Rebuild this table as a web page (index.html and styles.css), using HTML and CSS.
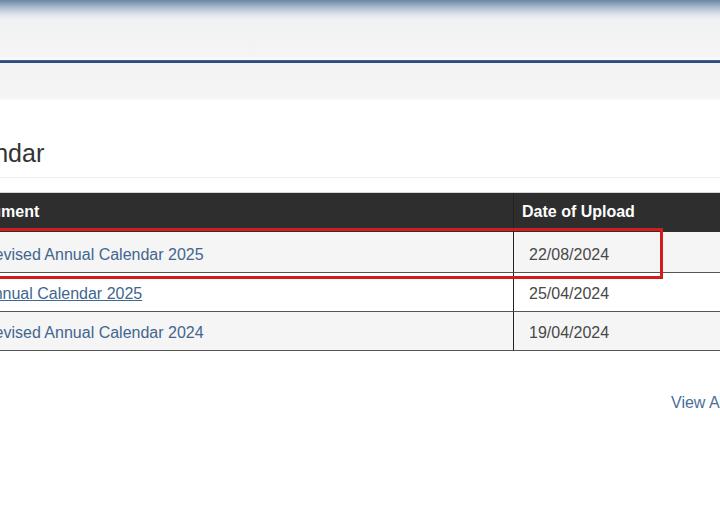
FILE: index.html
```html
<!DOCTYPE html>
<html lang="en">
<head>
<meta charset="utf-8">
<title>Annual Calendar</title>
<link rel="stylesheet" href="styles.css">
</head>
<body>
<header class="topbar"></header>
<div class="navline"></div>
<div class="subbar"></div>
<main class="content">
  <h2 class="page-title">Annual Calendar</h2>
  <div class="table-wrap">
    <table class="docs">
      <thead>
        <tr>
          <th class="col-doc">Document</th>
          <th class="col-date">Date of Upload</th>
        </tr>
      </thead>
      <tbody>
        <tr class="odd first">
          <td class="col-doc"><a href="#">Revised Annual Calendar 2025</a></td>
          <td class="col-date">22/08/2024</td>
        </tr>
        <tr class="even">
          <td class="col-doc"><a href="#" class="hover">Annual Calendar 2025</a></td>
          <td class="col-date">25/04/2024</td>
        </tr>
        <tr class="odd">
          <td class="col-doc"><a href="#">Revised Annual Calendar 2024</a></td>
          <td class="col-date">19/04/2024</td>
        </tr>
      </tbody>
    </table>
    <div class="highlight"></div>
  </div>
  <div class="more"><a href="#">View All</a></div>
</main>
</body>
</html>
```

FILE: styles.css
```css
html, body {
  margin: 0;
  padding: 0;
  background: #fff;
  overflow: hidden;
  width: 720px;
  height: 530px;
  font-family: "Liberation Sans", Arial, sans-serif;
}

.topbar {
  height: 60px;
  background: linear-gradient(to bottom, #6a85a3 0px, #a9b9cb 7px, #dde2e9 14px, #f0f1f2 20px, #f3f3f3 40px, #f5f5f6 56px, #fafbfb 60px);
}

.navline {
  height: 3px;
  background: linear-gradient(to bottom, #5a7898 0, #2e4f7a 1px, #2b4c78 3px);
}

.subbar {
  height: 37px;
  background: linear-gradient(to bottom, #f3f3f5 0, #f4f4f4 34px, #fbfbfb 37px);
}

.content {
  padding-top: 35px;
}

.page-title {
  margin: 0 0 0 -142px;
  font-weight: normal;
  font-size: 25px;
  line-height: 36px;
  color: #333;
  padding-bottom: 6px;
  border-bottom: 1px solid #eeeeee;
  white-space: nowrap;
}

.table-wrap {
  position: relative;
  margin-top: 14px;
}

.docs {
  border-collapse: separate;
  border-spacing: 0;
  margin-left: -47px;
  width: 830px;
  font-size: 16px;
  border-top: 1px solid #d5d5d5;
}

.docs th {
  background: #2e2e2e;
  color: #fff;
  font-weight: bold;
  text-align: left;
  padding: 10px 8px 11px 8px;
  line-height: 18px;
}

.docs th.col-doc {
  width: 544px;
}

.docs th.col-date,
.docs td.col-date {
  border-left: 1px solid #222;
}

.docs td {
  padding: 12px 0 8px 0;
  border-bottom: 1px solid #555;
  line-height: 18px;
}

.docs tr.first td {
  padding-top: 14px;
}

.docs td.col-doc {
  padding-left: 30px;
}

.docs td.col-date {
  padding-left: 15px;
  color: #484848;
}

.docs tr.odd td {
  background: #f5f5f5;
}

.docs tr.even td {
  background: #fff;
}

.docs a {
  color: #41668f;
  text-decoration: none;
}

.docs a.hover {
  text-decoration: underline;
}

.highlight {
  position: absolute;
  left: -20px;
  top: 36px;
  width: 683px;
  height: 51px;
  box-sizing: border-box;
  border: 3px solid #d21c1f;
  pointer-events: none;
}

.more {
  margin-top: 43px;
  padding-left: 671px;
  white-space: nowrap;
  font-size: 16px;
  line-height: 18px;
}

.more a {
  color: #4c6e96;
  text-decoration: none;
}
```
